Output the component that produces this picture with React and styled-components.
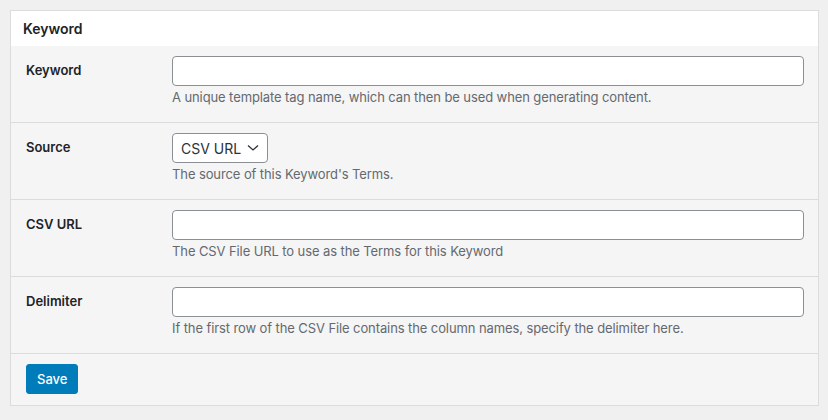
import React from "react";
import styled, { createGlobalStyle } from "styled-components";

const Global = createGlobalStyle`
  html, body { margin: 0; padding: 0; background: #f0f0f1; }
  body { font-family: Inter, "Noto Sans", sans-serif; -webkit-font-smoothing: antialiased; }
  * { box-sizing: border-box; }
`;

const Page = styled.div`
  padding: 10px 9px 0 10px;
`;

const Panel = styled.div`
  border: 1px solid #dcdcde;
  background: #f5f5f5;
`;

const Header = styled.div`
  height: 35px;
  display: flex;
  align-items: center;
  padding: 0 12px;
  background: #fff;
  font-size: 14px;
  font-weight: 600;
  color: #1d2327;
`;

const Row = styled.div`
  display: grid;
  grid-template-columns: 146px 1fr;
  padding: 10px 14px 16px 15px;
  border-bottom: 1px solid #dcdcde;
`;

const Label = styled.label`
  font-size: 13px;
  font-weight: 600;
  line-height: 18px;
  color: #1d2327;
  padding-top: 5px;
`;

const Field = styled.div`
  display: flex;
  flex-direction: column;
  align-items: flex-start;
`;

const Input = styled.input`
  width: 100%;
  height: 30px;
  border: 1px solid #8c8f94;
  border-radius: 4px;
  background: #fff;
  padding: 0 8px;
  font-size: 14px;
  margin: 0;
`;

const SelectBox = styled.div`
  width: 96px;
  height: 30px;
  border: 1px solid #8c8f94;
  border-radius: 4px;
  background: #fff;
  display: flex;
  align-items: center;
  justify-content: space-between;
  padding: 0 8px 0 8px;
  font-size: 14px;
  color: #2c3338;
`;

const Description = styled.p`
  margin: 2px 0 0;
  font-size: 13px;
  line-height: 18px;
  letter-spacing: -0.1px;
  color: #646970;
`;

const Footer = styled.div`
  padding: 10px 15px;
  height: 51px;
`;

const Button = styled.button`
  height: 30px;
  padding: 0 10px;
  border: 1px solid #007cba;
  border-radius: 3px;
  background: #007cba;
  color: #fff;
  font-family: inherit;
  font-size: 13px;
  font-weight: 500;
  cursor: pointer;
`;

const Chevron = () => (
  <svg width="12" height="8" viewBox="0 0 12 8">
    <path d="M1 1.5 L6 6 L11 1.5" fill="none" stroke="#2c3338" strokeWidth="1.3" />
  </svg>
);

const rows = [
  { label: "Keyword", desc: "A unique template tag name, which can then be used when generating content." },
  { label: "Source", select: "CSV URL", desc: "The source of this Keyword's Terms." },
  { label: "CSV URL", desc: "The CSV File URL to use as the Terms for this Keyword" },
  { label: "Delimiter", desc: "If the first row of the CSV File contains the column names, specify the delimiter here." },
];

export default function App() {
  return (
    <Page>
      <Global />
      <Panel>
        <Header>Keyword</Header>
        {rows.map((r) => (
          <Row key={r.label}>
            <Label>{r.label}</Label>
            <Field>
              {r.select ? (
                <SelectBox>
                  <span>{r.select}</span>
                  <Chevron />
                </SelectBox>
              ) : (
                <Input type="text" />
              )}
              <Description>{r.desc}</Description>
            </Field>
          </Row>
        ))}
        <Footer>
          <Button>Save</Button>
        </Footer>
      </Panel>
    </Page>
  );
}
